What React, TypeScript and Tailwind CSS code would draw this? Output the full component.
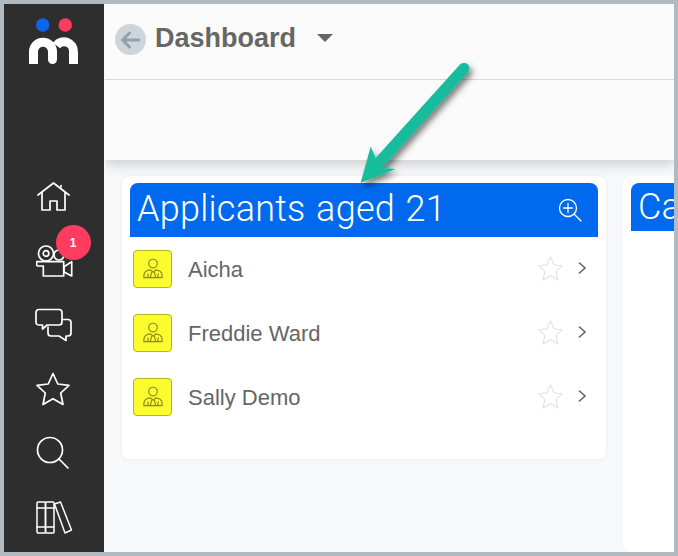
const sans = "font-['Liberation_Sans',Arial,sans-serif]";

function Logo() {
  return (
    <svg width="50" height="50" viewBox="0 0 50 50" className="block">
      <circle cx="13.700" cy="7" r="6.700" fill="#0a66f0" />
      <circle cx="36.300" cy="7" r="6.700" fill="#ff3b60" />
      <path d="M4.500 46V33.700A9.500 9.500 0 0 1 23.500 33.700V41.500" fill="none" stroke="#fff" strokeWidth="9" />
      <circle cx="23.500" cy="41.500" r="4.500" fill="#fff" />
      <path d="M27.500 27.500A9.500 9.500 0 0 1 44.500 33.700V46" fill="none" stroke="#fff" strokeWidth="9" />
    </svg>
  );
}

const ic = { fill: "none", stroke: "#fff", strokeWidth: 1.7, strokeLinecap: "round" as const, strokeLinejoin: "round" as const };

function Home() {
  return (
    <svg width="34" height="30" viewBox="0 0 34 30" {...ic}>
      <path d="M1 13 16.500 1 32 13" />
      <path d="M5 10V28H13V19H20V28H28V10" />
      <path d="M24 5V3.500" />
    </svg>
  );
}
function Camera() {
  return (
    <svg width="37" height="33" viewBox="0 0 37 33" {...ic} className="block">
      <circle cx="10" cy="8.500" r="7.500" />
      <circle cx="10" cy="8.500" r="2.800" />
      <circle cx="23" cy="10" r="5" />
      <path d="M.7 16.700H27.700V31H7.300V21H2Q.7 21 .7 19.700Z" />
      <path d="M28 21.700 35.700 16.700V31L28 27Z" />
    </svg>
  );
}
function Chat() {
  return (
    <svg width="38" height="34" viewBox="0 0 38 34" {...ic} className="block">
      <path d="M4 1.500H24Q27 1.500 27 4.500V14Q27 17 24 17H12L7.500 21V17H4Q1 17 1 14V4.500Q1 1.500 4 1.500Z" />
      <path d="M27 11.500H33Q36 11.500 36 14.500V25Q36 28 33 28H31V32.500L24 28H16Q13 28 13 25V19" />
    </svg>
  );
}
function Star({ c = "#fff", w = 1.7, s = 34 }: { c?: string; w?: number; s?: number }) {
  return (
    <svg width={s} height={s} viewBox="0 0 34 34" fill="none" stroke={c} strokeWidth={w} strokeLinejoin="round" className="block">
      <path d="M17 1.500 21.800 12 33 13.300 24.700 21 27 32.500 17 26.700 7 32.500 9.300 21 1 13.300 12.200 12Z" />
    </svg>
  );
}
function Search() {
  return (
    <svg width="34" height="34" viewBox="0 0 34 34" {...ic} className="block">
      <circle cx="14" cy="14" r="12.500" />
      <path d="M23 23 32 32" />
    </svg>
  );
}
function Books() {
  return (
    <svg width="37" height="34" viewBox="0 0 37 34" {...ic} strokeWidth={1.5} className="block">
      <rect x="1" y="1" width="8.500" height="31" rx="1" />
      <rect x="9.500" y="1" width="8.500" height="31" rx="1" />
      <path d="M1 7H18M1 26H18" />
      <path d="M18.500 3 24.500 1 35.500 29 29 32Z" />
    </svg>
  );
}
function Person() {
  return (
    <svg width="20" height="22" viewBox="0 0 22 24" fill="none" stroke="#8a8a20" strokeWidth="1.300">
      <circle cx="11" cy="6" r="4.700" />
      <path d="M1 21.500V19C1 15.500 4 13.500 8 13L11 15.500 14 13C18 13.500 21 15.500 21 19V21.500Z" />
      <path d="M9.500 15.500 8 21.500M12.500 15.500 14 21.500M5 17 6 21.500M17 17 16 21.500" />
    </svg>
  );
}
function Row({ name }: { name: string }) {
  return (
    <div className="flex items-center h-16">
      <div className="ml-[11px] w-[39px] h-[38px] rounded-[4px] bg-[#fbfb2e] border border-[#b5b520] flex items-center justify-center">
        <Person />
      </div>
      <span className="ml-[16px] mt-[1px] flex-1 text-[22px] leading-none text-[#666]">{name}</span>
      <div className="mr-[-1px] mb-[2px]"><Star c="#e3e3e3" w={1.6} s={25} /></div>
      <svg width="10" height="14" viewBox="0 0 10 14" fill="none" stroke="#666" strokeWidth="1.600" className="ml-[15px] mr-[19px] mb-[3px]">
        <path d="M2 1.500 8 7 2 12.500" />
      </svg>
    </div>
  );
}

export default function App() {
  return (
    <div className={`${sans} relative w-[678px] h-[556px] overflow-hidden border-y-4 border-x-4 border-[#b1bac1] bg-[#f7f8fa] flex`}>
      <aside className="w-[100px] shrink-0 bg-[#2e2e2e] flex flex-col items-center">
        <div className="mt-[14px]"><Logo /></div>
        <div className="mt-[114px] w-[34px] h-[30px]"><Home /></div>
        <div className="relative mt-[33px] h-[32px]">
          <Camera />
          <div className="absolute -top-[20px] left-[20px] w-[35px] h-[35px] rounded-full bg-[#ff3b60] text-white text-[12px] font-bold flex items-center justify-center">1</div>
        </div>
        <div className="mt-[31px] h-[34px]"><Chat /></div>
        <div className="mt-[30px] h-[34px] -translate-x-[1px]"><Star /></div>
        <div className="mt-[30px] h-[34px] -translate-x-[1px]"><Search /></div>
        <div className="mt-[31px] h-[34px]"><Books /></div>
      </aside>
      <main className="flex-1 min-w-0 ml-px flex flex-col overflow-hidden">
        <header className="h-[156px] shrink-0 bg-[#fbfbfb] shadow-[0_4px_12px_rgba(0,0,0,0.18)] relative">
          <div className="h-[76px] border-b border-[#d9d9d9] flex items-start pt-[19px] pl-[10px]">
            <div className="w-[31px] h-[31px] rounded-full bg-[#cdd5da] flex items-center justify-center mt-[1px]">
              <svg width="21" height="18" viewBox="0 0 21 18" fill="none" stroke="#8fa1ac" strokeWidth="3" strokeLinecap="round" strokeLinejoin="round">
                <path d="M19 9H3M9.500 2 2.500 9 9.500 16" />
              </svg>
            </div>
            <span className="ml-[9px] text-[27px] leading-[30px] font-bold text-[#666]">Dashboard</span>
            <span className="ml-[21px] mt-[11px] w-0 h-0 border-x-[8px] border-x-transparent border-t-[8px] border-t-[#666]" />
          </div>
        </header>
        <div className="flex gap-[17px] pl-[17px] pt-[16px] flex-1 min-h-0">
          <section className="w-[484px] h-[283px] shrink-0 bg-white rounded-[8px] shadow-[0_0_4px_rgba(0,0,0,0.05)] px-[8px] pt-[7px]">
            <div className="h-[54px] bg-[#0069ed] rounded-t-[8px] flex items-center text-white">
              <span className="ml-[7px] mb-[2px] flex-1 font-['Roboto',sans-serif] font-light text-[36px] leading-none tracking-[0.25px] [word-spacing:1.500px]">Applicants aged 21</span>
              <svg width="24" height="24" viewBox="0 0 24 24" fill="none" stroke="#fff" strokeWidth="1.300" strokeLinecap="round" className="mr-[16px]">
                <circle cx="10" cy="10" r="8.500" />
                <path d="M16 16 23 23M10 5.500V14.500M5.500 10H14.500" />
              </svg>
            </div>
            <div className="-mx-[8px]">
              <Row name="Aicha" />
              <Row name="Freddie Ward" />
              <Row name="Sally Demo" />
            </div>
          </section>
          <section className="w-[200px] shrink-0 bg-white rounded-[8px] px-[8px] pt-[7px]">
            <div className="h-[48px] bg-[#0069ed] rounded-t-[8px] overflow-hidden text-white font-['Roboto',sans-serif] font-light text-[36px] leading-[48px] pl-[7px]">Ca</div>
          </section>
        </div>
      </main>
      <svg className="absolute left-[352px] top-[54px]" width="125" height="135" viewBox="0 0 125 135">
        <defs>
          <filter id="s" x="-30%" y="-30%" width="160%" height="160%">
            <feDropShadow dx="3" dy="4" stdDeviation="3" floodColor="#000" floodOpacity="0.5" />
          </filter>
        </defs>
        <g filter="url(#s)">
          <path d="M4.700 124.700 14.700 88.700 19.700 100 104 6.500Q108 3 112 6.500 115 10.500 112 14L26 110 39.700 111Z" fill="#12bc9c" />
        </g>
      </svg>
    </div>
  );
}
